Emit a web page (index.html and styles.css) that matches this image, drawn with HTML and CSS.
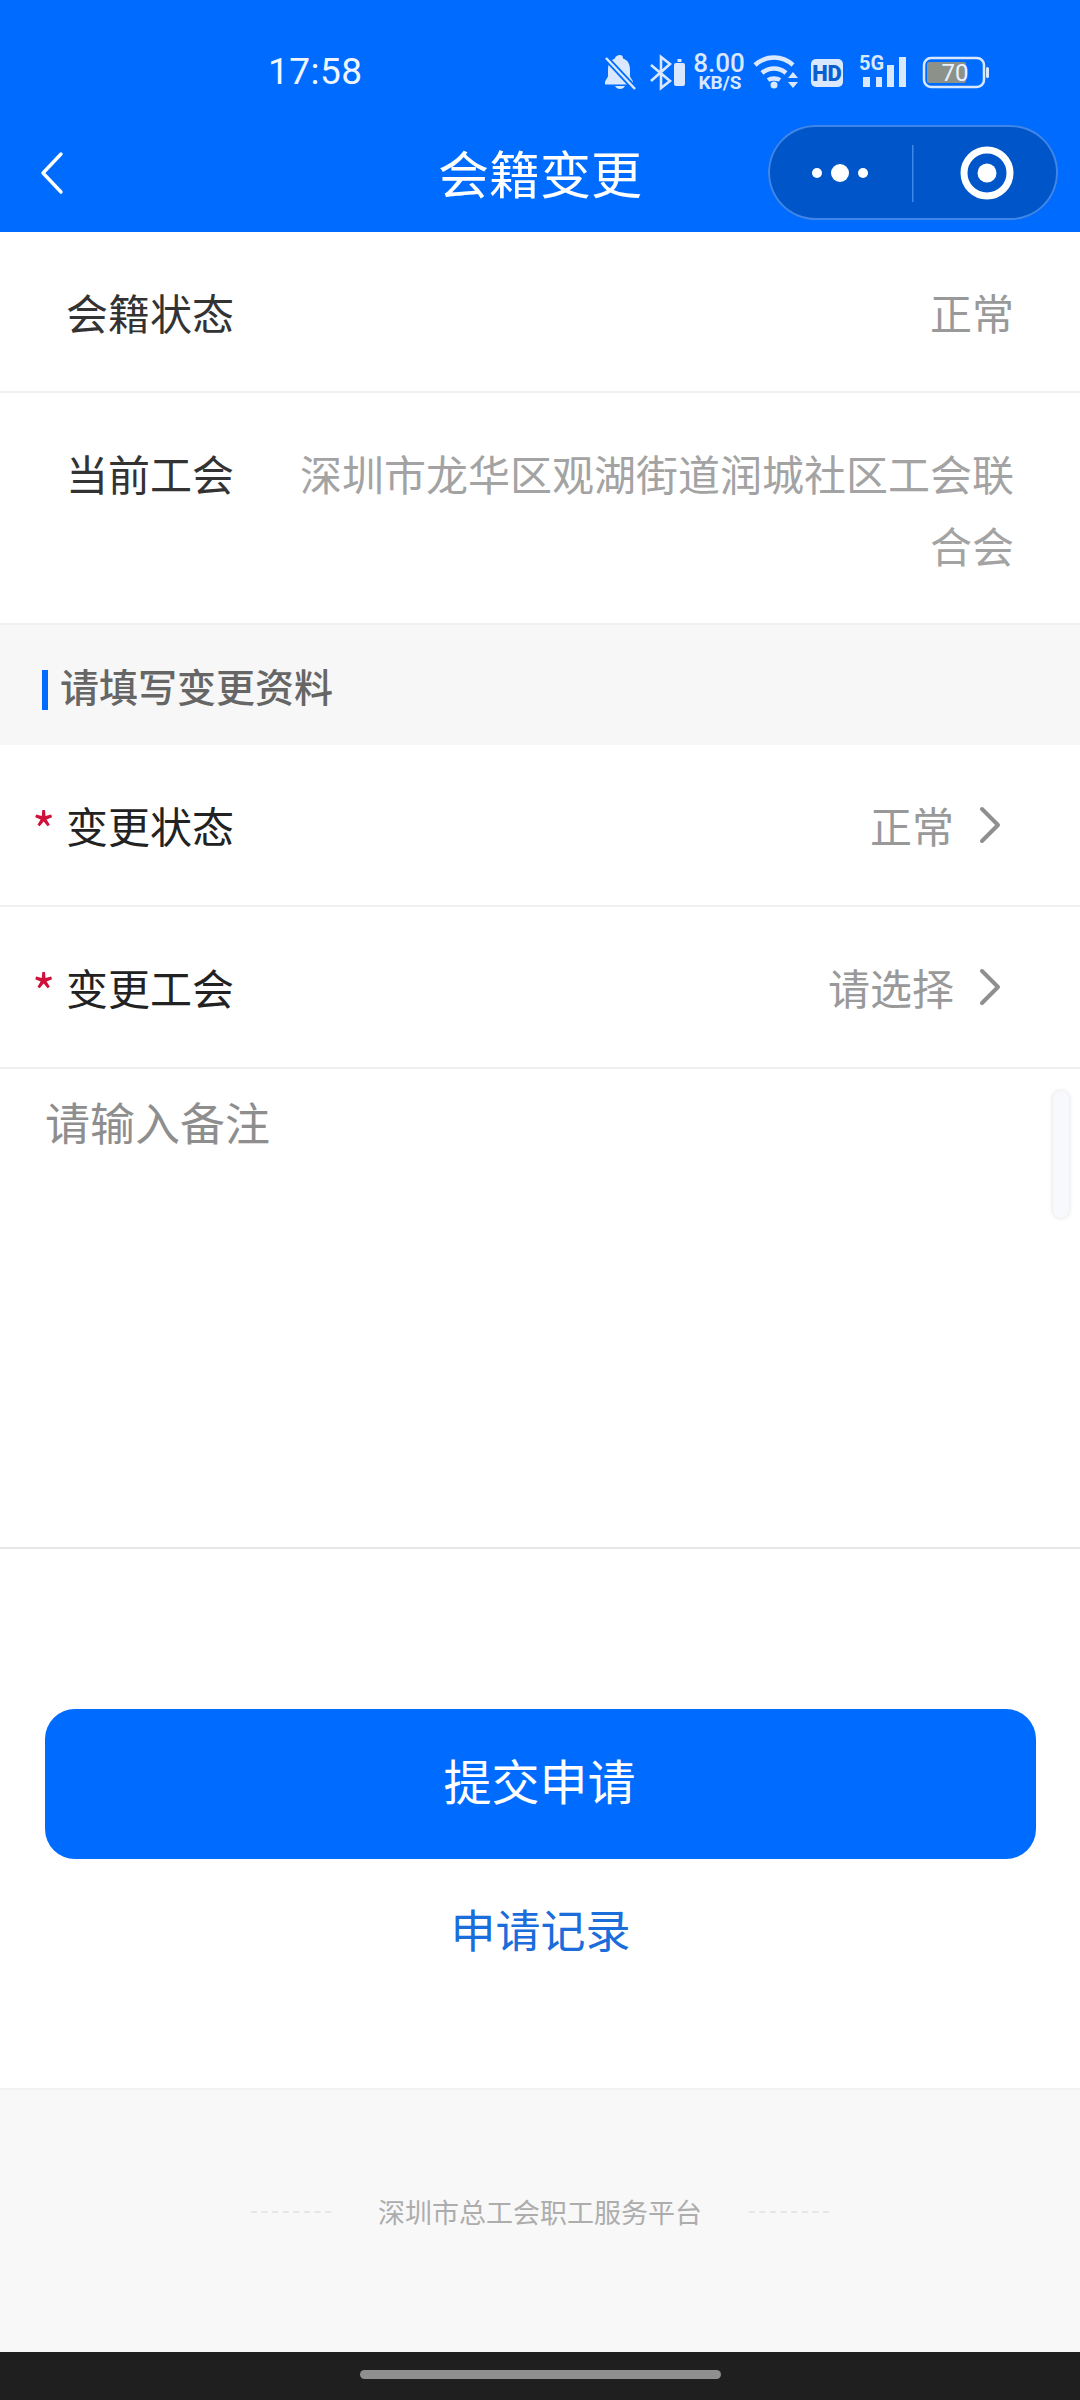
FILE: index.html
```html
<!DOCTYPE html>
<html lang="zh-CN">
<head>
    <meta charset="UTF-8">
    <meta name="viewport" content="width=device-width, initial-scale=1.0">
    <title>会籍变更</title>
    <link rel="stylesheet" href="styles.css">
</head>
<body>
    <div class="phone">
        <header class="top">
            <div class="status-bar">
                <span class="time">17:58</span>
                <svg class="status-icons" width="400" height="50" viewBox="0 0 400 50">
                    <!-- bell muted -->
                    <path d="M20 5c2 0 3 1.500 3 3.500 5 1.500 7 6 7 11v7l3 5v3H5v-3l3-5v-7c0-5 2-9.500 7-11C15 6.500 18 5 20 5z" fill="#d9e8ff"/>
                    <path d="M15 36h10c-1 2-3 3-5 3s-4-1-5-3z" fill="#d9e8ff"/>
                    <path d="M6 8l29 31" stroke="#006cff" stroke-width="6"/>
                    <path d="M6 8l29 31" stroke="#d9e8ff" stroke-width="2.500"/>
                    <!-- bluetooth and its battery -->
                    <path d="M51 15l19 16-9 7V7l9 7-19 17" fill="none" stroke="#d9e8ff" stroke-width="2.600"/>
                    <rect x="74" y="13" width="11" height="23" rx="2" fill="#d9e8ff"/>
                    <rect x="77.500" y="9" width="4" height="3" fill="#d9e8ff"/>
                    <!-- network speed -->
                    <text class="speed" x="119" y="22" text-anchor="middle">8.00</text>
                    <text class="speed-unit" x="120" y="39" text-anchor="middle">KB/S</text>
                    <!-- wifi -->
                    <path d="M155 15c11-10 27-10 38 0M162 23c7-6 17-6 24 0M168 30c3-2 9-2 12 0" fill="none" stroke="#d9e8ff" stroke-width="4.500"/>
                    <circle cx="174" cy="35" r="3.500" fill="#d9e8ff"/>
                    <path d="M193 22l5 6h-10zM193 38l5-6h-10z" fill="#d9e8ff"/>
                    <!-- hd badge -->
                    <rect x="211" y="9" width="32" height="28" rx="5" fill="#d9e8ff"/>
                    <text class="hd" x="227" y="31" text-anchor="middle">HD</text>
                    <!-- 5g signal -->
                    <text class="five-g" x="259" y="20">5G</text>
                    <rect x="263" y="27" width="7" height="10" fill="#d9e8ff"/>
                    <rect x="276" y="27" width="6" height="10" fill="#d9e8ff"/>
                    <rect x="287" y="15" width="7" height="22" fill="#d9e8ff"/>
                    <rect x="299" y="7" width="7" height="30" fill="#d9e8ff"/>
                    <!-- battery -->
                    <rect x="324" y="8" width="60" height="29" rx="7" fill="none" stroke="#d9e8ff" stroke-width="2.500"/>
                    <rect x="327" y="12" width="39" height="21" rx="2" fill="#8c9289"/>
                    <rect x="386" y="17" width="3" height="11" rx="1.500" fill="#d9e8ff"/>
                    <text class="battery-num" x="355" y="31" text-anchor="middle">70</text>
                </svg>
            </div>
            <div class="nav-bar">
                <div class="nav-left">
                    <svg width="24" height="44" viewBox="0 0 24 44">
                        <path d="M21 3L3 22l18 19" fill="none" stroke="#ffffff" stroke-width="3.400" stroke-linecap="round" stroke-linejoin="round"/>
                    </svg>
                </div>
                <div class="nav-title">会籍变更</div>
                <div class="nav-right">
                    <div class="capsule">
                        <svg width="290" height="95" viewBox="0 0 290 95">
                            <circle cx="49" cy="48" r="5" fill="#fff"/>
                            <circle cx="72" cy="48" r="9" fill="#fff"/>
                            <circle cx="95" cy="48" r="5" fill="#fff"/>
                            <rect x="144" y="20" width="1.500" height="57" fill="#3f86ea"/>
                            <circle cx="219" cy="48" r="23" fill="none" stroke="#fff" stroke-width="7"/>
                            <circle cx="219" cy="48" r="9.500" fill="#fff"/>
                        </svg>
                    </div>
                </div>
            </div>
        </header>

        <section class="info">
            <div class="row">
                <span class="row-label">会籍状态</span>
                <span class="row-value">正常</span>
            </div>
            <div class="row row-tall">
                <span class="row-label">当前工会</span>
                <span class="row-value row-value-wrap">深圳市龙华区观湖街道润城社区工会联合会</span>
            </div>
        </section>

        <div class="section-title">
            <span class="section-bar"></span>
            <span class="section-text">请填写变更资料</span>
        </div>

        <section class="form">
            <div class="row row-select">
                <span class="row-label"><i class="star">*</i>变更状态</span>
                <span class="row-pick">
                    <span class="row-value">正常</span>
                    <svg class="chevron" width="22" height="38" viewBox="0 0 22 38">
                        <path d="M3 3l16 16L3 35" fill="none" stroke="#8f8f8f" stroke-width="4" stroke-linecap="round" stroke-linejoin="round"/>
                    </svg>
                </span>
            </div>
            <div class="row row-select">
                <span class="row-label"><i class="star">*</i>变更工会</span>
                <span class="row-pick">
                    <span class="row-value">请选择</span>
                    <svg class="chevron" width="22" height="38" viewBox="0 0 22 38">
                        <path d="M3 3l16 16L3 35" fill="none" stroke="#8f8f8f" stroke-width="4" stroke-linecap="round" stroke-linejoin="round"/>
                    </svg>
                </span>
            </div>
            <div class="remark">
                <span class="remark-text">请输入备注</span>
                <div class="scroll-thumb"></div>
            </div>
        </section>

        <section class="actions">
            <div class="submit-btn">提交申请</div>
            <div class="record-link">申请记录</div>
        </section>

        <footer class="footer">
            <span class="footer-dash"></span>
            <span class="footer-text">深圳市总工会职工服务平台</span>
            <span class="footer-dash"></span>
        </footer>

        <div class="home-bar"><span class="home-pill"></span></div>
    </div>
</body>
</html>
```

FILE: styles.css
```css
* {
    box-sizing: border-box;
}

html, body {
    margin: 0;
    padding: 0;
}

body {
    font-family: 'Noto Sans CJK SC', 'Noto Sans', sans-serif;
    background-color: #ffffff;
}

.phone {
    width: 1080px;
    height: 2400px;
    display: flex;
    flex-direction: column;
    overflow: hidden;
}

/* Status bar + nav */
.top {
    height: 232px;
    background-color: #006cff;
    color: #ffffff;
}

.status-bar {
    height: 125px;
    display: flex;
    align-items: flex-start;
    justify-content: space-between;
    padding: 48px 0 0 268px;
}

.time {
    font-family: 'Roboto', sans-serif;
    font-size: 37px;
    line-height: 48px;
    letter-spacing: 0.5px;
    color: #f0f6ff;
}

.status-icons {
    margin: 2px 80px 0 0;
    overflow: visible;
}

.speed {
    font: 500 26px 'Roboto', sans-serif;
    fill: #d9e8ff;
}

.speed-unit {
    font: 700 19px 'Roboto', sans-serif;
    fill: #d9e8ff;
}

.hd {
    font: 900 22px 'Roboto', sans-serif;
    fill: #0a5fd0;
}

.five-g {
    font: 700 20px 'Roboto', sans-serif;
    fill: #d9e8ff;
}

.battery-num {
    font: 400 24px 'Roboto', sans-serif;
    fill: #e8f1ff;
}

.nav-bar {
    display: grid;
    grid-template-columns: 1fr auto 1fr;
    align-items: flex-start;
    height: 107px;
}

.nav-left {
    padding: 26px 0 0 40px;
}

.nav-left svg {
    display: block;
}

.nav-title {
    font-size: 51px;
    line-height: 95px;
    font-weight: 400;
}

.nav-right {
    display: flex;
    justify-content: flex-end;
    padding-right: 22px;
}

.capsule {
    width: 290px;
    height: 95px;
    background-color: #0056c8;
    border-radius: 48px;
    box-shadow: inset 0 0 0 2px #3f86ea;
}

.capsule svg {
    display: block;
}

/* Rows */
.row {
    display: flex;
    align-items: center;
    justify-content: space-between;
    height: 161px;
    padding: 0 66px 0 66px;
    background-color: #ffffff;
    border-bottom: 2px solid #f0f0f0;
}

.row-tall {
    align-items: flex-start;
    height: 232px;
    padding-top: 52px;
}

.row-label {
    position: relative;
    flex-shrink: 0;
    font-size: 42px;
    line-height: 56px;
    color: #333333;
}

.row-value {
    font-size: 42px;
    line-height: 56px;
    color: #999999;
    text-align: right;
}

.row-value-wrap {
    width: 720px;
    line-height: 72px;
    color: #a3a3a3;
    margin-top: -8px;
}

.row-select {
    height: 162px;
    padding-right: 79px;
}

.row-select .row-label {
    color: #222222;
}

.row-pick {
    display: flex;
    align-items: center;
    gap: 25px;
}

.chevron {
    display: block;
}

.star {
    position: absolute;
    left: -34px;
    top: 3px;
    font-style: normal;
    font-size: 50px;
    line-height: 56px;
    color: #d0103a;
}

/* Section heading */
.section-title {
    display: flex;
    align-items: center;
    gap: 12px;
    height: 120px;
    padding-left: 42px;
    background-color: #f7f7f7;
}

.section-bar {
    width: 6px;
    height: 40px;
    margin-top: 10px;
    background-color: #006cff;
}

.section-text {
    font-size: 39px;
    line-height: 40px;
    font-weight: 500;
    color: #666666;
}

/* Remark box */
.remark {
    position: relative;
    height: 480px;
    padding: 23px 0 0 45px;
    background-color: #ffffff;
    border-bottom: 2px solid #e6e6e6;
}

.remark-text {
    font-size: 45px;
    line-height: 60px;
    color: #8e8e8e;
}

.scroll-thumb {
    position: absolute;
    left: 1053px;
    top: 22px;
    width: 16px;
    height: 127px;
    border-radius: 8px;
    background-color: #f8f9fd;
    box-shadow: 0 0 5px rgba(0, 0, 0, 0.14);
}

/* Buttons */
.actions {
    height: 539px;
    padding: 160px 44px 0 45px;
    background-color: #ffffff;
}

.submit-btn {
    height: 150px;
    border-radius: 30px;
    background-color: #006cff;
    color: #ffffff;
    font-size: 48px;
    line-height: 141px;
    text-align: center;
    padding-right: 2px;
}

.record-link {
    margin-top: 39px;
    font-size: 45px;
    line-height: 62px;
    text-align: center;
    color: #1a6ddb;
}

/* Footer */
.footer {
    display: flex;
    align-items: center;
    justify-content: center;
    gap: 47px;
    height: 264px;
    padding-bottom: 18px;
    background-color: #f8f8f8;
    border-top: 2px solid #f2f2f2;
}

.footer-text {
    font-size: 27px;
    line-height: 40px;
    color: #adadad;
}

.footer-dash {
    width: 80px;
    border-top: 2px dashed #e6e6e6;
}

.home-bar {
    display: flex;
    justify-content: center;
    flex-shrink: 0;
    height: 48px;
    padding-top: 18px;
    background-color: #1f1f1f;
}

.home-pill {
    width: 361px;
    height: 9px;
    border-radius: 5px;
    background-color: #8f8f8f;
}
```
